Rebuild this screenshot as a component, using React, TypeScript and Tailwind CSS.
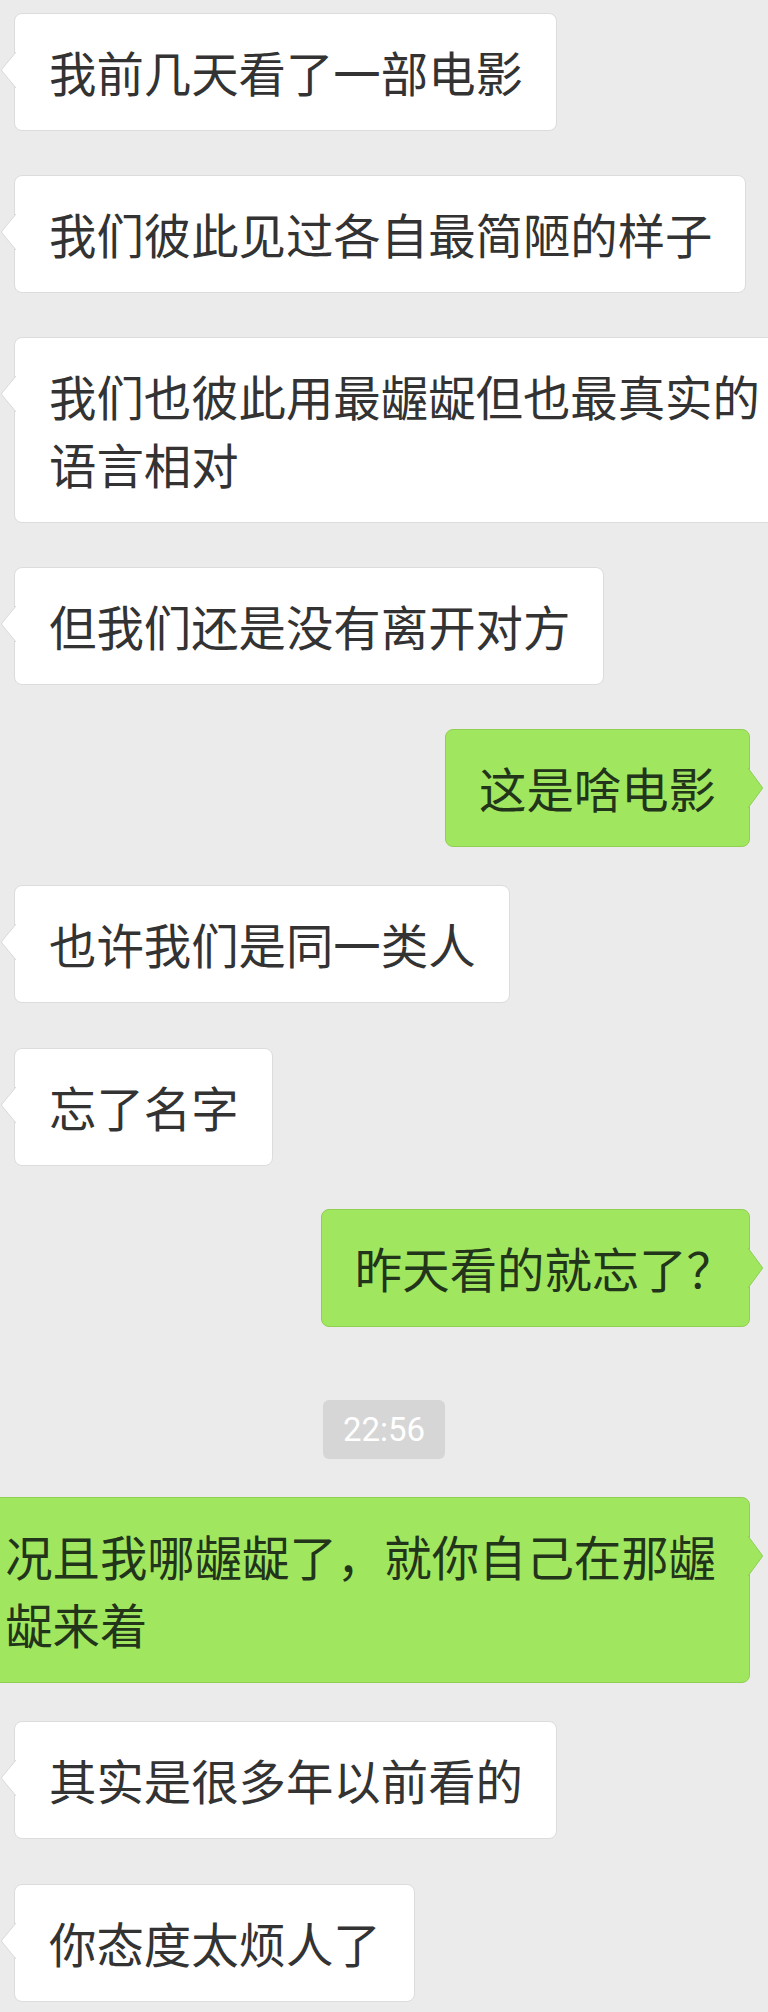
import React from "react";

const font = { fontFamily: '"Noto Sans CJK SC", "Noto Sans", sans-serif' };

function LeftTail() {
  return (
    <svg className="absolute left-[-14px] top-[38px]" width="16" height="36" viewBox="0 0 16 36">
      <path d="M15 0 L1 17 Q0 18 1 19 L15 36 Z" fill="#ffffff" />
      <path d="M15 0 L1 17 Q0 18 1 19 L15 36" fill="none" stroke="#d9d9d9" strokeWidth="1" />
    </svg>
  );
}

function RightTail() {
  return (
    <svg className="absolute right-[-14px] top-[38px]" width="16" height="40" viewBox="0 0 16 40">
      <path d="M1 0 L15 19 Q16 20 15 21 L1 40 Z" fill="#a0e75f" />
      <path d="M1 0 L15 19 Q16 20 15 21 L1 40" fill="none" stroke="#8fcf52" strokeWidth="1" />
    </svg>
  );
}

function Left({ lines, className = "" }: { lines: React.ReactNode[]; className?: string }) {
  return (
    <div className={"flex justify-start pl-[14px] " + className}>
      <div className="relative shrink-0 rounded-[8px] border border-[#dcdcdc] bg-white pl-[34px] pr-[33px] py-[24px] text-[47.4px] leading-[68px] text-[#333333]">
        <LeftTail />
        {lines.map((l, i) => (
          <div key={i} className="whitespace-nowrap">
            {l}
          </div>
        ))}
      </div>
    </div>
  );
}

function Right({ lines, className = "" }: { lines: React.ReactNode[]; className?: string }) {
  return (
    <div className={"flex justify-end pr-[18px] " + className}>
      <div className="relative shrink-0 rounded-[8px] border border-[#8fcf52] bg-[#a0e75f] pl-[33px] pr-[33px] py-[24px] text-[47.4px] leading-[68px] text-[#22341a]">
        <RightTail />
        {lines.map((l, i) => (
          <div key={i} className="whitespace-nowrap">
            {l}
          </div>
        ))}
      </div>
    </div>
  );
}

export default function App() {
  return (
    <div className="w-[768px] h-[2012px] overflow-hidden bg-[#ebebeb] pt-[13px]" style={font}>
      <div className="flex flex-col">
        <Left lines={["我前几天看了一部电影"]} />
        <Left className="mt-[44px]" lines={["我们彼此见过各自最简陋的样子"]} />
        <Left className="mt-[44px]" lines={["我们也彼此用最龌龊但也最真实的", "语言相对"]} />
        <Left className="mt-[44px]" lines={["但我们还是没有离开对方"]} />
        <Right className="mt-[44px]" lines={["这是啥电影"]} />
        <Left className="mt-[38px]" lines={["也许我们是同一类人"]} />
        <Left className="mt-[45px]" lines={["忘了名字"]} />
        <Right
          className="mt-[43px]"
          lines={[
            <>
              昨天看的就忘了<span className="tracking-[-18px]">？</span>
            </>,
          ]}
        />
        <div className="mt-[73px] flex justify-center">
          <div
            className="flex h-[59px] items-center rounded-[6px] bg-[#d6d6d6] px-[20px] text-[33px] text-white"
            style={{ fontFamily: 'Roboto, "Liberation Sans", sans-serif' }}
          >
            22:56
          </div>
        </div>
        <Right className="mt-[38px]" lines={["况且我哪龌龊了，就你自己在那龌", "龊来着"]} />
        <Left className="mt-[38px]" lines={["其实是很多年以前看的"]} />
        <Left className="mt-[45px]" lines={["你态度太烦人了"]} />
      </div>
    </div>
  );
}
